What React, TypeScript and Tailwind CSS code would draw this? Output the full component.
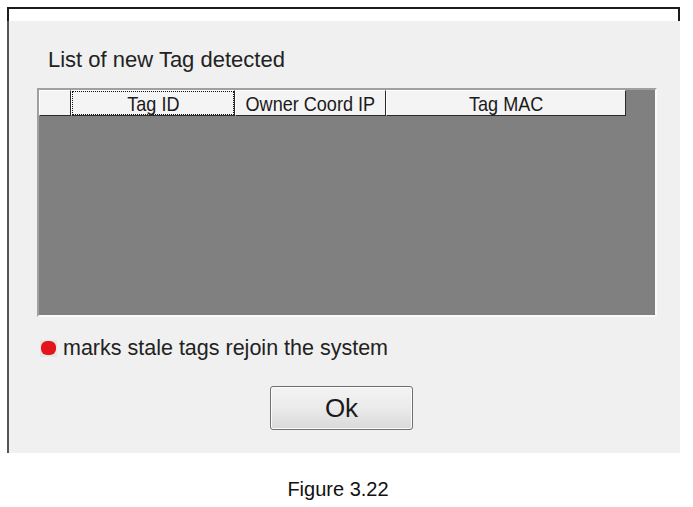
import React from 'react';

const columns = [
  { label: '', width: 'w-[32px]' },
  { label: 'Tag ID', width: 'w-[164px]', focused: true },
  { label: 'Owner Coord IP', width: 'w-[151px]' },
  { label: 'Tag MAC', width: 'w-[240px]' },
];

export default function App() {
  return (
    <div className="w-[693px] h-[507px] bg-white pt-[7px] pl-[7px] font-['Liberation_Sans',Arial,sans-serif] text-[#1a1a1a] overflow-hidden">
      <div className="w-[673px]">
        {/* cropped title bar */}
        <div className="h-[14px] bg-white border-t-2 border-l-2 border-r-2 border-[#1c1c1c]" />

        {/* dialog body */}
        <div className="h-[432px] bg-[#f0f0f0] border-l-2 border-[#555555] pl-[28px]">
          <div className="pt-[28px] pl-[11px] text-[22px] leading-[22px] text-[#222]">
            List of new Tag detected
          </div>

          <div className="mt-[17px] w-[620px] h-[229px] bg-[#808080] border-2 border-t-[#a0a0a0] border-l-[#a0a0a0] border-b-[#fafafa] border-r-[#fafafa]">
            <div className="flex h-[26px]">
              {columns.map((c, i) => (
                <div
                  key={i}
                  className={`${c.width} h-full relative bg-[#f4f4f4] border-t border-l border-white border-r border-b border-r-[#2a2a2a] border-b-[#2a2a2a] flex items-center justify-center text-[21px] leading-[21px] text-[#1a1a1a]`}
                >
                  {c.focused && (
                    <div className="absolute inset-0 border border-dotted border-[#111]" />
                  )}
                  <span className="inline-block scale-x-[0.86] whitespace-nowrap">{c.label}</span>
                </div>
              ))}
            </div>
          </div>

          <div className="mt-[16px] h-[30px] flex items-center pl-[3px]">
            <div className="w-[17px] h-[17px] bg-[#e6e6e6] flex items-center justify-center">
              <div className="w-[15px] h-[14px] rounded-[6px] bg-[#e3141c]" />
            </div>
            <span className="ml-[6px] text-[21.5px] leading-[22px] text-[#222]">
              marks stale tags rejoin the system
            </span>
          </div>

          <div className="mt-[23px] ml-[233px] w-[143px] h-[44px] rounded-[3px] border border-[#707070] bg-gradient-to-b from-[#f3f3f3] via-[#ebebeb] to-[#d9d9d9] flex items-center justify-center text-[26px] leading-[26px] text-[#1a1a1a] shadow-[inset_0_0_0_1px_#fcfcfc]">
            Ok
          </div>
        </div>
      </div>

      <div className="mt-[26px] w-[662px] flex justify-center text-[20px] leading-[20px] text-[#111]">
        Figure 3.22
      </div>
    </div>
  );
}
